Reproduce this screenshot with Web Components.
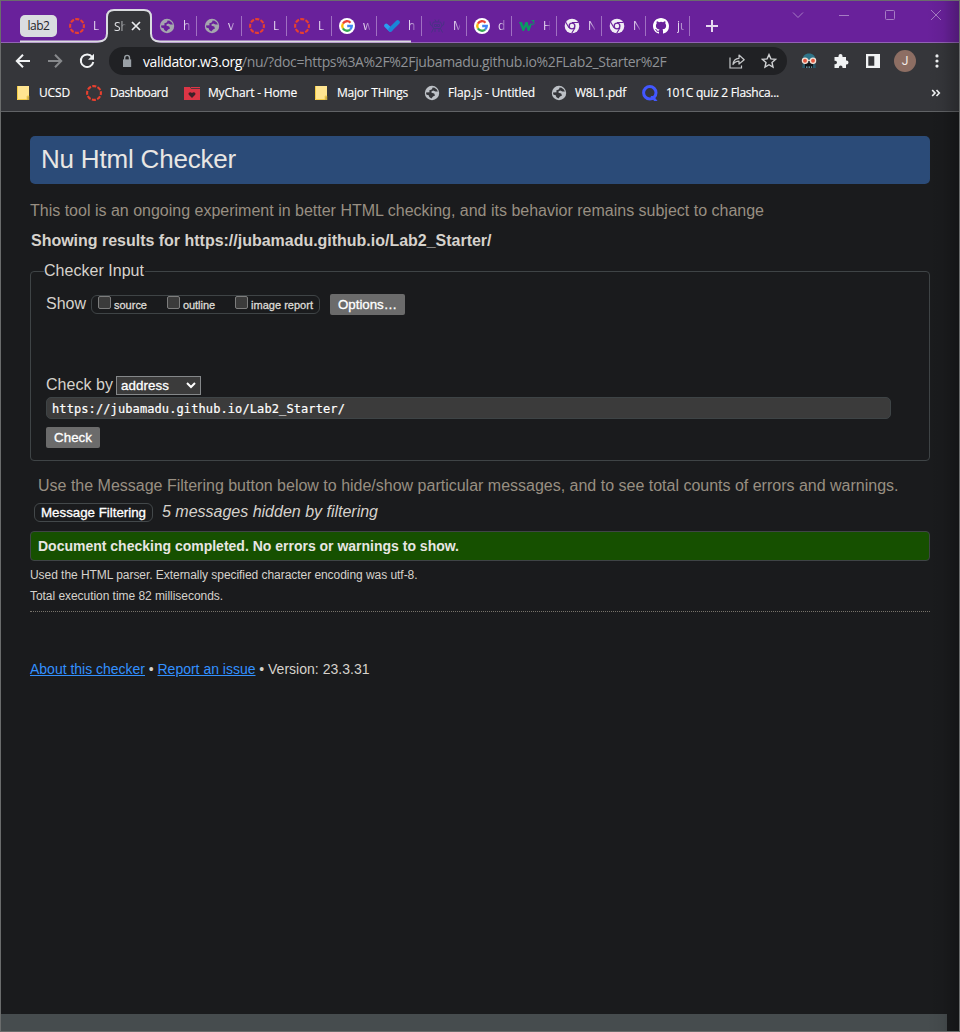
<!DOCTYPE html>
<html lang="en">
<head>
<meta charset="utf-8">
<title>Showing results for Lab2_Starter - Nu Html Checker</title>
<style>
html,body{margin:0;padding:0;height:100%;background:#1a1b1d;overflow:hidden}
</style>
</head>
<body>
<browser-window>
  <tab-strip slot="tabs"></tab-strip>
  <tool-bar slot="toolbar"></tool-bar>
  <bookmarks-bar slot="bookmarks">
    <bookmark-item icon="folder" w="31">UCSD</bookmark-item>
    <bookmark-item icon="ring" w="58">Dashboard</bookmark-item>
    <bookmark-item icon="chart" w="89">MyChart - Home</bookmark-item>
    <bookmark-item icon="folder" w="71">Major THings</bookmark-item>
    <bookmark-item icon="globe" w="87">Flap.js - Untitled</bookmark-item>
    <bookmark-item icon="globe" w="51">W8L1.pdf</bookmark-item>
    <bookmark-item icon="quiz" w="113">101C quiz 2 Flashca...</bookmark-item>
  </bookmarks-bar>
  <checker-page></checker-page>
</browser-window>
<script>
const define = (name, html, setup) => customElements.define(name, class extends HTMLElement {
  constructor() {
    super();
    const t = document.createElement('template');
    t.innerHTML = html;
    this.attachShadow({mode: 'open'}).append(t.content.cloneNode(true));
  }
  connectedCallback() { if (setup) setup(this, this.shadowRoot); }
});

const icons = {
  ring: '<circle cx="8" cy="8" r="6.9" fill="none" stroke="#e8402f" stroke-width="2.1" stroke-dasharray="4.1 1.32" stroke-dashoffset="2"/>',
  globe: '<circle cx="8" cy="8" r="7.2" fill="var(--globe,#bdc1c6)"/><path d="M8.6 2.400 8 4.200 5.200 5.600 5.600 7.200 2 7.600 2.300 9.500 5 10.400 5.200 12 7.400 13.600 9 11.600 11 10.400 10.200 8.600 7.600 7.800 7.400 6.500 9.200 5.400 11.400 6.400 13.900 6.400 12.800 4.400 10.600 2.700z" fill="var(--sea,#35363a)"/>',
  google: '<circle cx="8" cy="8" r="8" fill="#fff"/><g fill="none" stroke-width="2.3"><path d="M11.5 4.7A4.8 4.8 0 0 0 3.9 5.6" stroke="#ea4335"/><path d="M3.9 5.6a4.8 4.8 0 0 0 0 4.8" stroke="#fbbc05"/><path d="M3.9 10.4a4.8 4.8 0 0 0 7.2 1.2" stroke="#34a853"/><path d="M11.1 11.6A4.8 4.8 0 0 0 12.8 8H8.2" stroke="#4285f4"/></g>',
  check: '<path d="M2.300 7.800 6.400 11.600" stroke="#2a9df0" stroke-width="4.200" stroke-linecap="round"/><path d="M6.400 11.600 13.700 4.300" stroke="#1a86d8" stroke-width="4.200" stroke-linecap="round"/>',
  bot: '<g fill="none" stroke="#4b3186" stroke-width="1"><path d="M4.500 4h7l1.500 3-1.500 3.500h-7L3 7zM1 3.500 1.500 7 3 8M15 3.500 14.500 7 13 8M2.500 14.500l2-4M13.500 14.500l-2-4M6 11v3M10 11v3M6 1.500 7 4M10 1.500 9 4"/><path d="M5.500 6.500h2v2h-2zM8.500 6.500h2v2h-2z"/></g>',
  w3: '<path d="M0 4h3l1.500 4.600L6.500 4h2.200l1.100 4.500L12 5l.8 1-2.400 7H8.800L7.200 8.500 5 13H3.600z" fill="#0a9a63"/><path d="M12.600 2.500h2.600L14 4.100q1.500.1 1.200 1.400-.5 1.400-2.300.8" fill="none" stroke="#0a9a63" stroke-width="1"/>',
  chrome: '<circle cx="8" cy="8" r="7.300" fill="#f1edf5"/><circle cx="8" cy="8" r="3.500" fill="#69219b"/><circle cx="8" cy="8" r="2.200" fill="#f1edf5"/><path d="M8 4.500h6.500M5 9.700 1.600 4M11 9.800 7.700 15.200" stroke="#69219b" stroke-width="1.100"/>',
  github: '<path fill="#fff" d="M8 0C3.58 0 0 3.58 0 8c0 3.54 2.29 6.53 5.47 7.59.4.07.55-.17.55-.38 0-.19-.01-.82-.01-1.49-2.01.37-2.53-.49-2.69-.94-.09-.23-.48-.94-.82-1.13-.28-.15-.68-.52-.01-.53.63-.01 1.08.58 1.23.82.72 1.21 1.87.87 2.33.66.07-.52.28-.87.51-1.07-1.78-.2-3.64-.89-3.64-3.95 0-.87.31-1.59.82-2.15-.08-.2-.36-1.02.08-2.12 0 0 .67-.21 2.2.82a7.6 7.6 0 0 1 4 0c1.53-1.04 2.2-.82 2.2-.82.44 1.1.16 1.92.08 2.12.51.56.82 1.27.82 2.15 0 3.07-1.87 3.75-3.65 3.95.29.25.54.73.54 1.48 0 1.07-.01 1.93-.01 2.2 0 .21.15.46.55.38A8.01 8.01 0 0 0 16 8c0-4.42-3.58-8-8-8z"/>',
  folder: '<path d="M2 1h12v10.2h-1.400V15H2z" fill="#ffe591"/><path d="M2.500 1v13.500h9.600V11h1.600v4" fill="none" stroke="#f4cc45"/>',
  chart: '<path d="M0 2h6l1.300 2H16v11H0z" fill="#dc3545"/><path d="M7 2.600h9" stroke="#dc3545" stroke-width="1.200"/><path d="M8 13 4.800 9.700C3.600 8 6.300 6.200 8 8.100c1.700-1.900 4.400-.1 3.200 1.600z" fill="#3c2128"/>',
  quiz: '<circle cx="7.800" cy="7.800" r="6.200" fill="none" stroke="#4257ff" stroke-width="3"/><path d="M8.500 11h3.200l3.800 5h-3.400z" fill="#4257ff"/>',
  back: '<path d="M15 8H2M8 1.800 1.800 8 8 14.200" fill="none" stroke="#f1f3f4" stroke-width="2"/>',
  forward: '<path d="M1 8h13M8 1.800 14.200 8 8 14.200" fill="none" stroke="#87898c" stroke-width="2"/>',
  reload: '<path d="M13.200 4A6.300 6.300 0 1 0 14.300 9" fill="none" stroke="#f1f3f4" stroke-width="2"/><path d="M15 .8v6H9z" fill="#f1f3f4"/>',
  lock: '<path d="M4 6.400h8.200V14H4z" fill="#9aa0a6"/><path d="M5.700 7V4.800a2.400 2.400 0 0 1 4.800 0V7" fill="none" stroke="#9aa0a6" stroke-width="1.400"/>',
  share: '<g fill="none" stroke="#c6c8ca" stroke-width="1.200"><path d="M1 4.500V15h11.500v-2.500"/><path d="M4 11.500C4.400 7.500 6.500 5.400 10 5.300V2l5.200 4.800L10 11V8.200C7 8.200 5.500 9.200 4 11.500z" stroke-linejoin="round"/></g>',
  star: '<path d="m8 1.600 1.900 4.300 4.600.5-3.500 3.100 1 4.600L8 11.700 4 14.100l1-4.600L1.500 6.400l4.600-.5z" fill="none" stroke="#d0d2d4" stroke-width="1.400"/>',
  face: '<path d="M1.500 7.500C1.500 3 4 .5 8 .5s6.500 2.500 6.500 7z" fill="#2f7488"/><path d="M1.800 9h12.400l.6 6H1.200z" fill="#27586a"/><path d="M4 9.500h8v5.500H4z" fill="#12161a"/><circle cx="4" cy="7.800" r="2.600" fill="#e4583f" stroke="#f2e2d6" stroke-width="1.300"/><circle cx="12" cy="7.800" r="2.600" fill="#e4583f" stroke="#f2e2d6" stroke-width="1.300"/><path d="M6.500 7.300h3" stroke="#f2e2d6" stroke-width="1.200"/><path d="M5 14.200h1.500M7.500 14.200H9M10 14.200h1.200" stroke="#7db4c4" stroke-width="1.200"/>',
  puzzle: '<path d="M1.500 4h4V3a2 2 0 0 1 4 0v1H13v3.600h.6a1.900 1.900 0 0 1 0 3.800H13V15H9.500v-.7a1.800 1.800 0 0 0-3.600 0v.7H1.500v-3.700h.7a1.800 1.800 0 0 0 0-3.600h-.7z" fill="#f1f3f4"/>',
  panel: '<path d="M1 1h14v14H1zM3.300 3.300v9.400h6V3.300z" fill="#f1f3f4" fill-rule="evenodd"/>',
  dots: '<g fill="#f1f3f4"><circle cx="8" cy="2.900" r="1.600"/><circle cx="8" cy="8" r="1.600"/><circle cx="8" cy="13.100" r="1.600"/></g>',
  close: '<path d="m4 4 8 8m0-8-8 8" stroke="#e8eaed" stroke-width="1.700"/>',
  plus: '<path d="M8 2v12M2 8h12" stroke="#e6d8ef" stroke-width="2"/>',
  wchev: '<path d="m3 5.500 5 5 5-5" fill="none" stroke="#a67cc4"/>',
  wmin: '<path d="M3 8.500h10" stroke="#a67cc4"/>',
  wmax: '<rect x="3.500" y="3.500" width="9" height="9" rx="1" fill="none" stroke="#a67cc4"/>',
  wclose: '<path d="m3 3 10 10m0-10L3 13" stroke="#a67cc4"/>',
  caret: '<path d="m4 6 4 4 4-4" fill="none" stroke="#fff" stroke-width="2"/>',
  more: '<path d="m4.200 5 2.800 3-2.800 3M8.500 5l2.800 3-2.800 3" fill="none" stroke="#f1f3f4" stroke-width="1.700"/>'
};

define('browser-window', `<style>
:host{display:flex;flex-direction:column;position:relative;box-sizing:border-box;width:960px;height:1032px;border:1px solid #6a6c6c;background:#1a1b1d;font-family:"Open Sans","Noto Sans",sans-serif}
.shade{position:absolute;right:0;top:0;bottom:0;width:32px;background:linear-gradient(90deg,transparent,rgba(0,0,0,.05) 50%,rgba(0,0,0,.24));pointer-events:none}
main{flex:1}
.status{height:17px;margin-right:12px;background:#464c4e}
</style><slot name="tabs"></slot><slot name="toolbar"></slot><slot name="bookmarks"></slot><main><slot></slot></main><div class="status"></div><div class="shade"></div>`);

define('browser-tab', `<style>
:host{display:flex;box-sizing:border-box;width:45px;height:20px;align-items:center;padding-left:7px;border-right:1px solid #a070c2;font-size:12px;color:#e4d7ee;--globe:#a5a6ae;--sea:#69219b}
:host([narrow]){width:44px}
:host([first]){width:49px;padding-left:12px;border:0}
span{margin-left:8px;width:7px;height:18px;line-height:18px;overflow:hidden;white-space:pre;-webkit-mask-image:linear-gradient(90deg,#000 25%,rgba(0,0,0,.3))}
</style><ui-icon></ui-icon><span><slot></slot></span>`,
  (el, root) => root.querySelector('ui-icon').setAttribute('name', el.getAttribute('icon')));

define('tab-strip', `<style>
:host{display:flex;position:relative;box-sizing:border-box;height:42px;padding:9px 0 0 19px;background:#69219b;border-bottom:1px solid #9263b5;flex:none}
.outline{position:absolute;left:18px;top:7px;width:394px;height:35px}
.tabs{display:flex;position:relative;height:32px;align-items:center}
.chip{box-sizing:border-box;width:37px;height:22px;line-height:22px;border-radius:5px;background:#dadce0;color:#25262a;text-align:center;font-size:12px}
.active{display:flex;box-sizing:border-box;width:46px;padding-left:8px;align-items:center;font-size:12px;color:#dfe1e5}
.active span{width:16px;white-space:pre;-webkit-mask-image:linear-gradient(90deg,#000 6px,rgba(0,0,0,.5) 9px,transparent 12px)}
.active ui-icon{margin-left:-2px}
.plus{margin-left:14px}
.controls{position:absolute;right:15px;top:6px;display:flex;gap:30px}
</style>
<svg class="outline" viewBox="0 0 394 35"><path d="M77 35Q88 34 88 27V9q0-7 7-7h30q7 0 7 7v18q0 7 11 8z" fill="#35363a"/><path d="M1 33.500H79Q88 33.500 88 25.500V9q0-7 7-7h30q7 0 7 7v16.500q0 8 9 8H392" fill="none" stroke="#dadce0" stroke-width="2"/></svg>
<div class="tabs"><div class="chip"><fit-text w="22">lab2</fit-text></div>
<browser-tab icon="ring" first>L</browser-tab>
<div class="active"><span>Sh</span><ui-icon name="close"></ui-icon></div>
<browser-tab icon="globe">h</browser-tab><browser-tab icon="globe">v</browser-tab><browser-tab icon="ring">L</browser-tab><browser-tab icon="ring">L</browser-tab><browser-tab icon="google">w</browser-tab><browser-tab icon="check">h</browser-tab><browser-tab icon="bot">M</browser-tab><browser-tab icon="google">d</browser-tab><browser-tab icon="w3">H</browser-tab><browser-tab icon="chrome">N</browser-tab><browser-tab icon="chrome" narrow>N</browser-tab><browser-tab icon="github" narrow>ju</browser-tab>
<ui-icon class="plus" name="plus"></ui-icon></div>
<div class="controls"><ui-icon name="wchev"></ui-icon><ui-icon name="wmin"></ui-icon><ui-icon name="wmax"></ui-icon><ui-icon name="wclose"></ui-icon></div>`);

define('tool-bar', `<style>
:host{display:flex;align-items:center;box-sizing:border-box;height:36px;padding:0 14px;gap:16px;background:#35363a;flex:none}
.omni{display:flex;align-items:center;box-sizing:border-box;width:678px;height:28px;margin:0 -2px;padding:0 10px;border-radius:14px;background:#202124;font-size:14px;color:#8f9296}
.url{flex:1;display:flex;margin-left:8px}
.host{color:#fff}
.share{margin-right:16px}
.avatar{width:22px;height:22px;margin:0 -3px;border-radius:50%;background:#8d6e63;color:#f3ebe7;text-align:center;font:12px/22px Roboto,sans-serif}
</style><ui-icon name="back"></ui-icon><ui-icon name="forward"></ui-icon><ui-icon name="reload"></ui-icon>
<div class="omni"><ui-icon name="lock"></ui-icon><div class="url"><fit-text w="99" class="host">validator.w3.org</fit-text><fit-text w="424.500">/nu/?doc=https%3A%2F%2Fjubamadu.github.io%2FLab2_Starter%2F</fit-text></div><ui-icon name="share" class="share"></ui-icon><ui-icon name="star"></ui-icon></div>
<ui-icon name="face"></ui-icon><ui-icon name="puzzle"></ui-icon><ui-icon name="panel"></ui-icon><div class="avatar">J</div><ui-icon name="dots"></ui-icon>`);

define('bookmarks-bar', `<style>
:host{display:flex;box-sizing:border-box;align-items:center;gap:16px;height:33px;padding:0 15px 5px 14px;background:#35363a;border-bottom:1px solid #616366;flex:none}
.more{margin-left:auto}
</style><slot></slot><ui-icon class="more" name="more"></ui-icon>`);

define('bookmark-item', `<style>
:host{display:flex;align-items:center;gap:8px;font-size:12px;line-height:18px;color:#fff}
fit-text{-webkit-text-stroke:.15px}
</style><ui-icon></ui-icon><fit-text><slot></slot></fit-text>`,
  (el, root) => {
    root.querySelector('ui-icon').setAttribute('name', el.getAttribute('icon'));
    root.querySelector('fit-text').setAttribute('w', el.getAttribute('w'));
  });

define('check-option', `<style>
:host{display:flex;align-items:flex-start;font-size:11px;color:#dedbd6}
i{box-sizing:border-box;width:13px;height:13px;border:1px solid #7d7d7d;border-radius:2px;background:#3b3b3b;margin-right:3px}
fit-text{line-height:19px;-webkit-text-stroke:.3px}
</style><i></i><fit-text><slot></slot></fit-text>`,
  (el, root) => root.querySelector('fit-text').setAttribute('w', el.getAttribute('w')));

define('action-button', `<style>
:host{display:block;box-sizing:border-box;width:max-content;height:21px;line-height:21px;padding:0 8px;border-radius:2px;background:#6b6b6b;color:#fff;font-size:13.333px;-webkit-text-stroke:.3px}
:host([outline]){height:19px;line-height:17px;padding:0 6px;border:1px solid #43484a;border-radius:6px;background:none}
</style><fit-text><slot></slot></fit-text>`,
  (el, root) => root.querySelector('fit-text').setAttribute('w', el.getAttribute('w')));

define('checker-form', `<style>
:host{display:block}
fieldset{box-sizing:border-box;width:900px;height:200px;margin:0;padding:0 13px;border:1px solid #3f4446;border-radius:4px}
legend{padding:0 1px 0 0;height:20px;line-height:20px}
.body{padding-left:2px}
.row{display:flex;align-items:center;height:22px}
.show{margin-top:12px}
.opts{display:flex;box-sizing:border-box;width:229px;height:19px;margin:0 10px 0 5px;padding-left:6px;border:1px solid #3f4446;border-radius:6px}
.opts check-option:nth-child(1),.opts check-option:nth-child(2){margin-right:20px}
.by{margin-top:59px}
.select{display:flex;box-sizing:border-box;width:85px;height:19px;margin-left:3px;padding:0 1px 0 4px;border:1px solid #85888a;background:#3b3b3b;color:#fff;font-size:13.333px;line-height:17px;justify-content:space-between;align-items:center;-webkit-text-stroke:.3px}
.input{box-sizing:border-box;width:845px;height:22px;margin:1px 0 8px;padding-left:5px;line-height:22px;border:1px solid #3e4446;border-radius:5px;background:#3b3b3b;color:#fff;font-family:"DejaVu Sans Mono",monospace;font-size:12px;-webkit-text-stroke:.2px}
</style><fieldset><legend><fit-text w="100">Checker Input</fit-text></legend><div class="body">
<div class="row show"><fit-text w="40">Show</fit-text><div class="opts"><check-option w="33">source</check-option><check-option w="32">outline</check-option><check-option w="62">image report</check-option></div><action-button w="59">Options…</action-button></div>
<div class="row by"><fit-text w="67">Check by</fit-text><div class="select"><fit-text w="48">address</fit-text><ui-icon name="caret"></ui-icon></div></div>
<div class="input"><fit-text w="293">https://jubamadu.github.io/Lab2_Starter/</fit-text></div>
<action-button w="38">Check</action-button></div></fieldset>`);

define('checker-page', `<style>
:host{display:block;box-sizing:border-box;width:929px;padding:24px 0 0 29px;font-family:"Liberation Sans",Arial,sans-serif;font-size:16px;line-height:20px;color:#d6d2cc}
h1{box-sizing:border-box;width:900px;height:48px;margin:0 0 17px;padding-left:11px;border-radius:5px;background:#2b4b78;color:#e8e6e3;font-weight:400;font-size:26px;line-height:46px}
p{margin:0;height:20px}
.muted{color:#988f82}
.results{margin:10px 0 10px;padding-left:1px;font-weight:700}
.hint{margin:15px 0 0;padding-left:8px}
.filter{display:flex;align-items:center;height:20px;margin:6px 0 9px;padding-left:4px;gap:9px;font-style:italic}
.filter action-button{font-style:normal}
.ok{box-sizing:border-box;width:900px;height:30px;padding-left:7px;border:1px solid #3f4446;border-radius:4px;background:#165000;color:#e8e6e3;font-size:14px;font-weight:700;line-height:28px}
.small{font-size:12px;line-height:20px;margin-top:4px}
.small+.small{margin-top:1px}
.rule{width:900px;height:0;margin-top:5px;border-top:1px dotted #77736b}
footer{display:flex;margin-top:47px;font-size:14px;line-height:20px;white-space:pre}
a{color:#3391ff;text-decoration:underline}
</style>
<h1><fit-text w="195">Nu Html Checker</fit-text></h1>
<p class="muted"><fit-text w="734">This tool is an ongoing experiment in better HTML checking, and its behavior remains subject to change</fit-text></p>
<p class="results"><fit-text w="460.500">Showing results for https://jubamadu.github.io/Lab2_Starter/</fit-text></p>
<checker-form></checker-form>
<p class="muted hint"><fit-text w="860.500">Use the Message Filtering button below to hide/show particular messages, and to see total counts of errors and warnings.</fit-text></p>
<div class="filter"><action-button outline w="105">Message Filtering</action-button><fit-text w="216">5 messages hidden by filtering</fit-text></div>
<div class="ok"><fit-text w="421">Document checking completed. No errors or warnings to show.</fit-text></div>
<p class="small"><fit-text w="387.500">Used the HTML parser. Externally specified character encoding was utf-8.</fit-text></p>
<p class="small"><fit-text w="193">Total execution time 82 milliseconds.</fit-text></p>
<div class="rule"></div>
<footer><a><fit-text w="115">About this checker</fit-text></a><fit-text w="12.500"> • </fit-text><a><fit-text w="98">Report an issue</fit-text></a><fit-text w="12.500"> • </fit-text><fit-text w="101.500">Version: 23.3.31</fit-text></footer>`);

// Registered after its users, so that the name attribute is already in place.
define('ui-icon', `<style>:host{display:block;width:16px;height:16px;flex:none}svg{display:block;width:100%;height:100%}</style><svg viewBox="0 0 16 16"></svg>`,
  (el, root) => { root.querySelector('svg').innerHTML = icons[el.getAttribute('name')]; });

// Spreads a label over a given width by adjusting its letter spacing.
define('fit-text', `<style>:host{display:inline-block;white-space:pre;vertical-align:top;text-decoration:inherit}span{display:inline-block;text-decoration:inherit}</style><span><slot></slot></span>`,
  (el, root) => {
    const w = +el.getAttribute('w');
    if (!w) return;
    const span = root.querySelector('span');
    const host = el.getRootNode().host;
    const n = (el.textContent.trim() ? el.textContent : host.textContent).length;
    span.style.letterSpacing = (w - span.getBoundingClientRect().width) / n + 'px';
    el.style.width = w + 'px';
  });
</script>
</body>
</html>
